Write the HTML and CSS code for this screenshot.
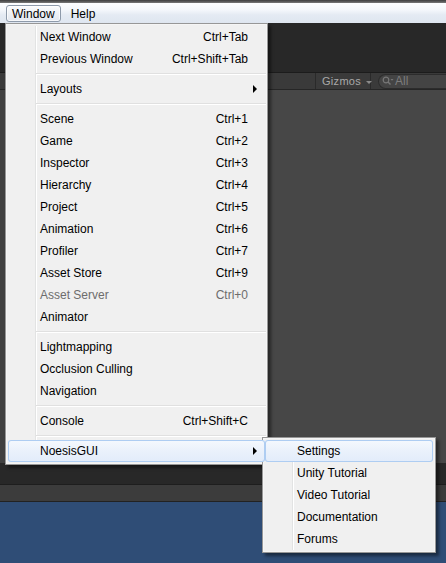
FILE: index.html
```html
<!DOCTYPE html>
<html>
<head>
<meta charset="utf-8">
<link rel="stylesheet" href="styles.css">
</head>
<body>
<div class="screen">
  <div class="titlestrip"></div>
  <div class="menubar">
    <span class="mb-item active">Window</span>
    <span class="mb-item">Help</span>
  </div>
  <div class="editor">
    <div class="ed-top"></div>
    <div class="ed-toolbar">
      <div class="gizmos">Gizmos <span class="caret"></span></div>
      <div class="search">
        <svg width="12" height="10" viewBox="0 0 12 10"><circle cx="4" cy="4" r="2.8" fill="none" stroke="#777" stroke-width="1.2"/><path d="M6 6 L8.5 8.5" stroke="#777" stroke-width="1.4"/><path d="M8.5 3 L11.5 3 L10 4.8 Z" fill="#777"/></svg>
        <span class="search-text">All</span>
      </div>
    </div>
    <div class="ed-scene"></div>
    <div class="ed-dark"></div>
    <div class="ed-bar"></div>
    <div class="ed-blue"></div>
  </div>

  <div class="menu main-menu">
    <div class="mi"><span class="label">Next Window</span><span class="key">Ctrl+Tab</span></div>
    <div class="mi"><span class="label">Previous Window</span><span class="key">Ctrl+Shift+Tab</span></div>
    <div class="sep"></div>
    <div class="mi"><span class="label">Layouts</span><span class="arrow"></span></div>
    <div class="sep"></div>
    <div class="mi"><span class="label">Scene</span><span class="key">Ctrl+1</span></div>
    <div class="mi"><span class="label">Game</span><span class="key">Ctrl+2</span></div>
    <div class="mi"><span class="label">Inspector</span><span class="key">Ctrl+3</span></div>
    <div class="mi"><span class="label">Hierarchy</span><span class="key">Ctrl+4</span></div>
    <div class="mi"><span class="label">Project</span><span class="key">Ctrl+5</span></div>
    <div class="mi"><span class="label">Animation</span><span class="key">Ctrl+6</span></div>
    <div class="mi"><span class="label">Profiler</span><span class="key">Ctrl+7</span></div>
    <div class="mi"><span class="label">Asset Store</span><span class="key">Ctrl+9</span></div>
    <div class="mi disabled"><span class="label">Asset Server</span><span class="key">Ctrl+0</span></div>
    <div class="mi"><span class="label">Animator</span></div>
    <div class="sep"></div>
    <div class="mi"><span class="label">Lightmapping</span></div>
    <div class="mi"><span class="label">Occlusion Culling</span></div>
    <div class="mi"><span class="label">Navigation</span></div>
    <div class="sep"></div>
    <div class="mi"><span class="label">Console</span><span class="key">Ctrl+Shift+C</span></div>
    <div class="sep"></div>
    <div class="mi hl"><span class="label">NoesisGUI</span><span class="arrow"></span></div>
  </div>

  <div class="menu sub-menu">
    <div class="mi hl"><span class="label">Settings</span></div>
    <div class="mi"><span class="label">Unity Tutorial</span></div>
    <div class="mi"><span class="label">Video Tutorial</span></div>
    <div class="mi"><span class="label">Documentation</span></div>
    <div class="mi"><span class="label">Forums</span></div>
  </div>
</div>
</body>
</html>
```

FILE: styles.css
```css
html, body {
  margin: 0;
  padding: 0;
  background: #2f4d76;
  overflow: hidden;
}

.screen {
  position: relative;
  width: 446px;
  height: 563px;
  font-family: "Liberation Sans", Arial, sans-serif;
  font-size: 12px;
  color: #000;
  overflow: hidden;
}

.titlestrip {
  height: 3px;
  background: linear-gradient(#3e3e3e, #5e5e5e 60%, #7a7a7a);
}

.menubar {
  height: 20px;
  box-sizing: border-box;
  padding: 2px 0 0 6px;
  display: flex;
  align-items: flex-start;
  background: linear-gradient(#fdfeff 0%, #f4f7fb 35%, #e4eaf3 60%, #dfe6f0 100%);
}

.mb-item {
  height: 17px;
  line-height: 16px;
  padding: 0 7px;
  box-sizing: border-box;
  border: 1px solid transparent;
}

.mb-item.active {
  padding: 0 5px;
  margin-right: 2px;
  border: 1px solid #8e9aaa;
  border-radius: 3px;
  background: linear-gradient(#fbfcfd, #eef1f6 50%, #e2e7ef);
  box-shadow: inset 0 0 0 1px rgba(255,255,255,0.7);
}

.editor {
  display: flex;
  flex-direction: column;
}

.ed-top {
  height: 49px;
  background: #282828;
}

.ed-toolbar {
  height: 18px;
  box-sizing: border-box;
  background: #3a3a3a;
  border-top: 1px solid #1c1c1c;
  border-bottom: 1px solid #262626;
  display: flex;
  align-items: center;
  padding-left: 315px;
}

.gizmos {
  height: 16px;
  box-sizing: border-box;
  border-left: 1px solid #2a2a2a;
  border-right: 1px solid #2a2a2a;
  padding: 0 4px 0 6px;
  width: 56px;
  display: flex;
  align-items: center;
  color: #a9a9a9;
  font-size: 11px;
  letter-spacing: 0.3px;
  gap: 5px;
}

.caret {
  width: 0;
  height: 0;
  border-left: 3px solid transparent;
  border-right: 3px solid transparent;
  border-top: 3px solid #8a8a8a;
  margin-top: 2px;
}

.search {
  margin-left: 7px;
  flex: 1;
  height: 13px;
  border: 1px solid #2c2c2c;
  border-right: none;
  border-radius: 8px 0 0 8px;
  background: #444;
  display: flex;
  align-items: center;
  padding-left: 3px;
  gap: 1px;
}

.search-text {
  color: #7d7d7d;
  font-size: 12px;
  line-height: 13px;
}

.ed-scene {
  height: 373px;
  background: #474747;
  border-left: 5px solid #404040;
}

.ed-dark {
  height: 21px;
  background: #282828;
}

.ed-bar {
  height: 18px;
  box-sizing: border-box;
  background: #3c3c3c;
  border-top: 1px solid #1e1e1e;
  border-bottom: 1px solid #222;
}

.ed-blue {
  flex: 1;
  height: 61px;
  background: #2f4d76;
}

/* Menus */
.menu {
  position: absolute;
  box-sizing: border-box;
  background: #f0f0f0;
  border: 1px solid #979797;
  padding: 2px;
  box-shadow: inset 0 0 0 1px #f5f5f5, 3px 3px 3px rgba(0, 0, 0, 0.45);
}

.menu::before {
  content: "";
  position: absolute;
  left: 29px;
  top: 2px;
  bottom: 2px;
  width: 1px;
  background: #e2e3e3;
  box-shadow: 1px 0 0 #ffffff;
}

.main-menu {
  left: 5px;
  top: 23px;
  width: 263px;
}

.sub-menu {
  left: 262px;
  top: 437px;
  width: 174px;
}

.mi {
  position: relative;
  z-index: 1;
  height: 22px;
  display: flex;
  align-items: center;
  padding: 0 17px 0 32px;
  white-space: nowrap;
}

.mi .label {
  flex: 1;
}

.mi .key {
  text-align: right;
}

.mi.disabled {
  color: #6d6d6d;
}

.mi.hl {
  border-radius: 3px;
  background: linear-gradient(#f5f9fe, #eaf1fb 50%, #e2ecfa);
  box-shadow: inset 0 0 0 1px #aecdf2;
}

.arrow {
  position: absolute;
  right: 8px;
  top: 7px;
  width: 0;
  height: 0;
  border-left: 4px solid #000;
  border-top: 4px solid transparent;
  border-bottom: 4px solid transparent;
}

.sep {
  position: relative;
  z-index: 1;
  height: 8px;
  margin-left: 28px;
  margin-right: -1px;
  display: flex;
  flex-direction: column;
  justify-content: center;
}

.sep::before {
  content: "";
  display: block;
  height: 1px;
  background: #e0e0e0;
  border-bottom: 1px solid #ffffff;
}
```
